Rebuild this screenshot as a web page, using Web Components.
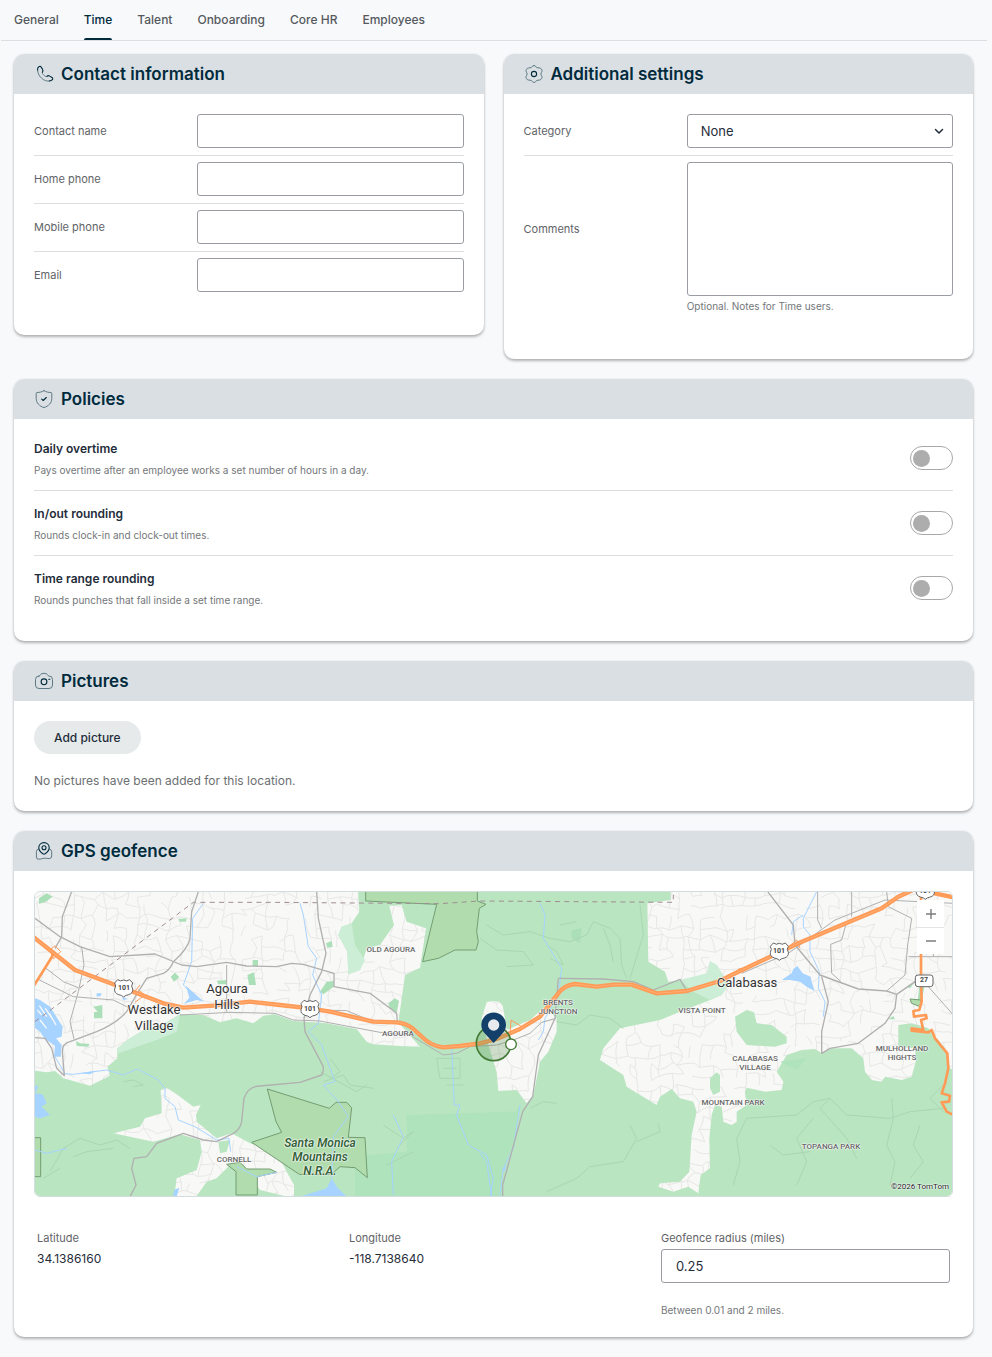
<!DOCTYPE html>
<html lang="en">
<head>
<meta charset="utf-8">
<meta name="viewport" content="width=device-width, initial-scale=1">
<title>Location settings</title>
<style>
  :root {
    --ink: #002b3d;
    --text: #1f2d3a;
    --muted: #5f6367;
    --soft: #74777a;
    --line: #dcdfe2;
    --field: #999da3;
    --head: #dadfe3;
  }
  body { margin: 0; background: #f8f9fb; color: var(--text); font-family: Inter, "Liberation Sans", sans-serif; font-size: 12px; }
</style>
</head>
<body>
<settings-page></settings-page>

<script>
const define = (name, html, setup) => {
  const template = document.createElement('template');
  template.innerHTML = html.trim();
  customElements.define(name, class extends HTMLElement {
    constructor() {
      super();
      this.attachShadow({ mode: 'open' }).append(template.content.cloneNode(true));
    }
    connectedCallback() { if (setup) setup.call(this, this.shadowRoot); }
  });
};

/* ---------- tabs ---------- */
define('tab-bar', `
  <style>
    :host { display: block; margin: 0 5px 0 1px; border-bottom: 1px solid var(--line); }
    nav { display: flex; gap: 25px; padding: 0 13px; }
    a { position: relative; line-height: 40px; font-size: 12px; font-weight: 500; color: #55595e; text-decoration: none; }
    a[aria-current] { color: var(--ink); }
    a[aria-current]::after { content: ""; position: absolute; left: 0; right: 0; bottom: 0; height: 2px; background: var(--ink); border-radius: 2px 2px 0 0; }
  </style>
  <nav aria-label="Location sections">
    <a href="#general">General</a><a href="#time" aria-current="page">Time</a><a href="#talent">Talent</a>
    <a href="#onboarding">Onboarding</a><a href="#core-hr">Core HR</a><a href="#employees">Employees</a>
  </nav>`);

/* ---------- icons ---------- */
const icons = {
  phone: '<path class="l" d="M3.6 6 C3.8 9.5 5.2 12 7.6 14.2 C10 16.4 12.6 17.4 15.4 17"/><path class="l" d="M8.4 8.2 C7.8 9 8.8 10.2 10 11.3 C11.2 12.4 12.2 12.9 13 12.3"/><path d="M3.6 6 C3.4 4.4 4 3.2 5.2 2.6 C6 2.2 6.8 2.4 7.3 3.2 L8.6 5.4 C9.2 6.5 9 7.4 8.4 8.2"/><path d="M13 12.3 C13.8 11.6 14.8 11.5 15.7 12.1 L18 13.5 C18.8 14 19 14.9 18.4 15.6 C17.6 16.5 16.6 16.9 15.4 17"/>',
  gear: '<path class="l" d="M10 1.6 C11.4 1.6 11.9 2.6 12.6 3.5 C13.3 4 14.6 3.6 15.7 4 C17.4 4.6 18.3 5.8 18 7.2 C17.6 8.4 16.9 9 16.9 10 C16.9 11 17.6 11.6 18 12.8 C18.3 14.2 17.4 15.4 15.7 16 C14.6 16.4 13.3 16 12.6 16.5 C11.9 17.4 11.4 18.4 10 18.4 C8.6 18.4 8.1 17.4 7.4 16.5 C6.7 16 5.4 16.4 4.3 16 C2.6 15.4 1.7 14.2 2 12.8 C2.4 11.6 3.1 11 3.1 10 C3.1 9 2.4 8.4 2 7.2 C1.7 5.8 2.6 4.6 4.3 4 C5.4 3.6 6.7 4 7.4 3.5 C8.1 2.6 8.6 1.6 10 1.6Z"/><circle cx="10" cy="10" r="2.6"/>',
  shield: '<path class="l" d="M10 1.7 C12 2.9 14.3 3.5 17 3.5 Q17.8 3.6 17.8 4.5 L17.8 9.5 C17.8 14 14.5 17.2 10 18.6 C5.5 17.2 2.2 14 2.2 9.5 L2.2 4.5 Q2.2 3.6 3 3.5 C5.7 3.5 8 2.9 10 1.7Z"/><path d="M7.7 10.2 L9.2 11.5 L12.3 8.5"/>',
  camera: '<path class="l" d="M5 5 C6.3 5 6.2 3.5 7.3 2.9 Q10 1.6 12.7 2.9 C13.8 3.5 13.7 5 15 5 Q18.5 5 18.5 8.4 V14 Q18.5 17.5 15 17.5 H5 Q1.5 17.5 1.5 14 V8.4 Q1.5 5 5 5Z"/><circle cx="10" cy="10.8" r="2.9"/><path d="M14.8 8.2 H15.9"/>',
  pin: '<path class="l" d="M4.5 8 Q2.4 8.3 2.4 10.6 V16 Q2.4 18.5 5 18.2 C7.5 18 8.3 17.5 10.2 17.2 C12 17 13.6 17.6 15.2 17.6 Q17.7 17.6 17.7 15 V10.6 Q17.7 8.7 15.6 8"/><path d="M10 1.6 C13 1.6 15.2 3.8 15.2 6.7 C15.2 9.5 12.8 11.6 11.1 12.8 Q10 13.5 8.9 12.8 C7.2 11.6 4.8 9.5 4.8 6.7 C4.8 3.8 7 1.6 10 1.6Z"/><circle cx="10" cy="6.8" r="2"/>'
};

/* ---------- card ---------- */
define('settings-card', `
  <style>
    :host { display: block; background: #fff; border-radius: 10px; overflow: hidden; box-shadow: 0 2px 3px rgba(0,0,0,.28), 0 0 2px rgba(0,0,0,.1); }
    header { display: flex; align-items: center; gap: 7px; height: 40px; padding: 0 20px; background: var(--head); color: var(--ink); }
    svg { width: 20px; height: 20px; fill: none; stroke: var(--ink); stroke-width: 1.1; stroke-linecap: round; stroke-linejoin: round; }
    svg .l { stroke: #5f7984; stroke-width: 1; }
    h2 { margin: 0; font-size: 17px; font-weight: 600; line-height: 24px; }
    .body { padding: 0 20px; }
  </style>
  <section>
    <header><svg viewBox="0 0 20 20" aria-hidden="true"></svg><h2></h2></header>
    <div class="body"><slot></slot></div>
  </section>`, function (root) {
  root.querySelector('h2').textContent = this.getAttribute('heading');
  root.querySelector('svg').innerHTML = icons[this.getAttribute('icon')];
});

/* ---------- form rows ---------- */
const rowStyle = `
  <style>
    :host { display: block; border-bottom: 1px solid var(--line); padding: 6px 0 7px; }
    :host([last]) { border-bottom-color: transparent; }
    .row { display: grid; grid-template-columns: 38% 1fr; align-items: center; }
    label { font-size: 11px; line-height: 14px; color: var(--muted); }
    input, select, textarea { box-sizing: border-box; display: block; width: 100%; height: 34px; margin: 0; padding: 0 13px; border: 1px solid var(--field); border-radius: 3px; background: #fff; color: var(--text); font: 13px Inter, "Liberation Sans", sans-serif; outline: 0; }
    textarea { height: 134px; padding: 8px 13px; resize: none; }
    small { grid-column: 2; padding: 3px 0; font-size: 10px; line-height: 14px; color: var(--soft); }
    select { appearance: none; }
    .pick { display: grid; align-items: center; }
    .pick > * { grid-area: 1 / 1; }
    .pick svg { justify-self: end; margin-right: 9px; width: 10px; height: 10px; fill: none; stroke: var(--text); stroke-width: 1.5; stroke-linecap: round; stroke-linejoin: round; pointer-events: none; }
  </style>`;

define('text-row', rowStyle + `<div class="row"><label for="f"></label><input id="f" type="text"></div>`, function (root) {
  root.querySelector('label').textContent = this.getAttribute('label');
});
define('select-row', rowStyle + `<div class="row"><label for="f">Category</label><div class="pick"><select id="f"><option>None</option></select><svg viewBox="0 0 10 10" aria-hidden="true"><path d="M1.5 3.5 L5 7 L8.5 3.5"/></svg></div></div>`);
define('notes-row', rowStyle + `<div class="row"><label for="f">Comments</label><textarea id="f" aria-describedby="h"></textarea><small id="h">Optional. Notes for Time users.</small></div>`);

/* ---------- policy toggles ---------- */
define('policy-row', `
  <style>
    :host { display: flex; align-items: center; justify-content: space-between; border-bottom: 1px solid var(--line); }
    :host([last]) { border-bottom-color: transparent; }
    .copy { padding: 15px 0 13px; }
    label { display: block; font-size: 12px; line-height: 16px; font-weight: 600; color: var(--text); }
    p { margin: 6px 0 0; font-size: 10px; line-height: 14px; color: var(--soft); }
    input { appearance: none; box-sizing: border-box; display: flex; align-items: center; width: 43px; height: 24px; margin: 0; padding: 0 2px; border: 1px solid #a8a8a8; border-radius: 12px; background: #fff; }
    input::before { content: ""; width: 17px; height: 17px; border-radius: 50%; background: #adadad; }
    input:checked { justify-content: flex-end; }
  </style>
  <div class="copy"><label for="t"></label><p id="d"></p></div>
  <input id="t" type="checkbox" role="switch" aria-describedby="d">`, function (root) {
  root.querySelector('label').textContent = this.getAttribute('label');
  root.querySelector('p').textContent = this.getAttribute('note');
});

/* ---------- pictures ---------- */
define('picture-list', `
  <style>
    :host { display: block; padding: 20px 0 22px; }
    button { display: block; height: 33px; padding: 0 20px; border: 0; border-radius: 17px; background: #e6eaeb; color: var(--text); font: 500 12px Inter, "Liberation Sans", sans-serif; }
    p { margin: 19px 0 0; font-size: 12px; line-height: 16px; color: #6c6f72; }
  </style>
  <button type="button">Add picture</button>
  <p>No pictures have been added for this location.</p>`);

/* ---------- map ---------- */
define('map-label', `
  <style>
    :host { position: absolute; left: calc(var(--x) / 917 * 100%); top: calc(var(--y) / 304 * 100%); transform: translate(-50%, -50%); white-space: pre; text-align: center; font: 500 8px/9px Roboto, sans-serif; color: #666; text-shadow: 0 0 2px #fff, 0 0 2px #fff, 0 0 1px #fff; }
    :host([kind="town"]) { font-size: 13px; line-height: 16px; font-weight: 400; color: #333; }
    :host([kind="park"]) { font-size: 12px; line-height: 14px; font-style: italic; color: #35633a; font-weight: 600; }
    :host([kind="road"]) { font-size: 7px; font-weight: 700; color: #444; text-shadow: none; }
    :host([kind="credit"]) { color: #222; font-weight: 400; }
  </style><slot></slot>`);

/* Irregular street lattice: jittered nodes joined with some links left out. */
function streets() {
  let seed = 11;
  const rnd = () => (seed = (seed * 16807) % 2147483647) / 2147483647;
  const step = 32, cols = 90, rows = 31, nodes = [];
  for (let r = 0; r < rows; r++) for (let c = 0; c < cols; c++)
    nodes.push([Math.round(c * step + rnd() * 24 - 12), Math.round(r * step + rnd() * 24 - 12)]);
  let d = '';
  const join = (a, b) => {
    const mx = Math.round((a[0] + b[0]) / 2 + rnd() * 14 - 7), my = Math.round((a[1] + b[1]) / 2 + rnd() * 14 - 7);
    d += `M${a}Q${mx} ${my} ${b}`;
  };
  for (let r = 0; r < rows - 1; r++) for (let c = 0; c < cols - 1; c++) {
    const n = nodes[r * cols + c];
    if (rnd() > .42) join(n, nodes[r * cols + c + 1]);
    if (rnd() > .42) join(n, nodes[(r + 1) * cols + c]);
  }
  return d;
}

define('geo-map', `
  <style>
    :host { display: block; position: relative; overflow: hidden; border: 1px solid #d3dde0; border-radius: 6px; aspect-ratio: 917 / 304; }
    svg.base { display: block; width: 100%; height: 100%; }
    .water { fill: #a6d3ff; }
    .stream { fill: none; stroke: #a6d3ff; stroke-width: 3; stroke-linejoin: round; }
    .park { fill: #b1dcae; stroke: #759d72; stroke-width: 3; }
    .road { fill: none; stroke: #b0b0b0; stroke-width: 4; stroke-linejoin: round; }
    .trail { fill: none; stroke: #aad6b2; stroke-width: 3; stroke-linejoin: round; }
    .minor { fill: none; stroke: #e7e7e6; stroke-width: 3; }
    .way { fill: none; stroke: #ff9b57; stroke-width: 13; stroke-linejoin: round; }
    .way.thin { stroke-width: 8; }
    .core { fill: none; stroke: #ffb680; stroke-width: 2; stroke-linejoin: round; }
    .zoom { position: absolute; top: 8px; right: 8px; display: grid; grid-auto-rows: 27px; grid-template-columns: 27px; background: #fff; }
    button { display: grid; place-items: center; margin: 0; padding: 0; border: 0; background: #fff; }
    button + button { border-top: 1px solid #e4e4e4; }
    button svg { width: 12px; height: 12px; stroke: #7c7c7c; stroke-width: 1.4; }
  </style>
  <svg class="base" viewBox="15 21 2751 912" preserveAspectRatio="xMidYMid slice" role="img" aria-label="Map of the geofence around Agoura and Calabasas">
    <rect x="0" y="0" width="2800" height="960" fill="#f8f8f7"/>
    <path class="minor" id="streets"/>
    <path fill="#b9e5c1" fill-rule="evenodd" d="M0,555 50,562 75,558 100,580 180,602 240,572 232,545 262,520 262,490 300,460 350,430 380,430 420,405 450,388 520,390 570,412 620,400 670,415 700,392 735,388 790,408 890,415 980,432 1010,470 1030,478 1110,483 1170,485 1130,440 1105,412 1108,390 1125,270 1170,248 1188,130 1130,110 1115,60 1078,62 1092,120 1050,180 1010,190 990,255 955,268 952,200 925,150 935,125 965,115 988,80 983,0 1922,0 1922,45 1852,55 1855,230 1905,260 1915,290 1950,285 2030,270 2040,230 2060,240 2085,280 2095,300 2075,330 2040,345 1950,380 1890,405 1770,430 1720,490 1710,525 1780,570 1790,605 1880,660 1890,635 1925,612 1950,640 1990,650 2000,680 1985,750 1978,860 1950,890 1890,895 1885,905 1930,920 1975,905 2005,925 2012,870 2040,850 2038,760 2045,690 2055,660 2075,665 2080,710 2105,720 2120,710 2120,680 2150,660 2145,620 2150,608 2205,620 2255,615 2260,590 2240,560 2270,510 2315,495 2355,492 2375,505 2405,490 2465,490 2500,520 2505,560 2525,585 2555,590 2565,575 2615,585 2645,575 2657,530 2655,490 2605,485 2605,420 2645,415 2695,430 2745,490 2760,550 2770,555 2770,940 0,940Z
      M1370,352 1385,348 1408,350 1418,362 1425,400 1430,435 1500,405 1545,365 1580,400 1580,440 1555,500 1530,530 1510,630 1490,655 1460,615 1405,618 1400,560 1375,480 1355,400Z
      M392,615 410,608 440,628 490,665 512,660 498,690 500,710 560,760 605,745 660,775 740,800 770,860 792,900 792,940 690,915 640,840 600,840 560,880 530,890 495,940 432,940 440,880 500,855 515,800 510,765 450,748 370,770 300,755 250,745 330,725 345,700 395,685Z"/>
    <path fill="#b9e5c1" d="M2115,395 2150,375 2172,382 2180,415 2225,420 2270,455 2270,475 2235,485 2150,480 2120,440ZM2040,580 2060,562 2070,570 2070,620 2050,630 2040,610ZM565,770 600,765 590,800 570,805Z"/>
    <path fill="#cdeed6" d="M925,150 935,125 965,115 975,180 1005,225 990,255 955,268 952,200ZM1950,285 2030,265 2040,228 2060,240 2095,300 2075,330 2040,345 1990,320ZM262,490 300,460 350,430 380,430 450,388 440,440 380,465 265,505Z"/>
    <path fill="#aee3bb" d="M1130,690 1455,680 1470,660 1455,760 1420,860 1415,940 975,940 975,850 1010,810 1130,800ZM2250,530 2330,520 2300,555Z"/>
    <path fill="#abdfb8" d="M27,40 50,25 68,35 45,52 27,56ZM190,365 217,360 217,400 192,400 192,382 203,380ZM445,102 470,100 468,110 448,110ZM422,275 435,263 448,277 432,290ZM560,287 590,285 588,298 565,298ZM668,225 684,225 684,245 668,243ZM652,270 672,262 678,300 657,300ZM138,468 150,475 178,477 175,485 140,483ZM888,175 905,168 908,185 892,188ZM870,320 890,290 911,288 911,305 880,328ZM1075,355 1095,340 1107,348 1100,385 1078,368ZM1625,135 1655,130 1650,175 1625,160ZM2630,305 2655,290 2640,310ZM2668,305 2683,305 2675,350 2663,345ZM2575,403 2590,393 2595,403Z"/>
    <g class="park">
      <path d="M1007,0V48L1220,58 1178,230 1225,220 1275,195H1338L1345,170 1340,140 1348,70 1368,58 1342,48V0Z"/>
      <path d="M712,612 898,670 918,652H950L965,668 955,757 1005,758 1012,878 975,848 930,845 905,868H808L665,772 755,742 738,710Z"/>
      <path d="M590,838 618,860V930H682V875L740,862 720,852H650L630,832Z"/>
      <path d="M0,758H32V875H0ZM2640,342 2673,345 2670,365 2645,355Z"/>
    </g>
    <path class="trail" d="M60,860 100,790 150,760 210,780 260,765 300,790M40,880 90,850M130,815 170,800 250,790M280,590 310,585 340,600 310,605M880,590 940,570 960,600 1030,610M900,520 930,560 900,580M870,560 980,620 1010,600M1220,520H1290V580H1230ZM1240,550H1280M1250,600H1300M1060,720 1120,760 1150,740 1100,790M1070,840 1110,820 1150,800M1370,120 1420,150 1500,140 1560,160 1620,170 1670,150 1690,110 1740,130 1770,160 1775,240 1790,280M1720,130 1740,180 1750,230M1550,180 1580,200 1600,240 1560,220M1350,160 1400,195 1480,200 1510,240 1430,245M1830,60 1840,150 1800,280M1590,120 1640,110M1580,410 1640,420 1680,390 1740,400 1780,430M1500,670 1540,650 1580,655M1800,720 1820,760 1780,830 1680,845 1640,880 1550,920M1820,770 1890,740 1885,715M2150,700 2300,690 2350,650 2400,640 2450,690 2580,700 2640,680 2740,670M2585,640 2590,700 2570,780 2595,830 2580,900M2150,700 2120,760 2130,830 2110,900M2400,640 2370,670 2450,760 2480,820M2670,720 2650,780 2680,830 2640,880M2350,700 2300,760 2330,830 2300,900M2220,780 2260,810 2340,800M2740,600 2700,640 2740,680"/>
    <path class="water" d="M0,335 30,345 60,365 98,425 95,455 78,460 95,480 92,515 72,515 75,482 45,462 30,440 0,418ZM0,595 25,605 15,625 38,628 50,655 35,665 60,690 30,700 0,690ZM468,302 485,318 522,350 500,345 462,356 478,338ZM200,325 215,325 212,333 200,335ZM275,336 295,342 280,345ZM150,565 200,557 180,568ZM432,915 448,908 440,935 430,935ZM810,935 890,910 905,880 920,905 950,935ZM2255,285 2285,265 2290,252 2302,243 2318,265 2342,275 2345,290 2354,318 2330,305 2310,290 2280,285ZM1415,855 1428,840 1425,858Z"/>
    <path fill="none" stroke="#f8f8f7" stroke-width="4" d="M22,375 35,390M28,362 50,395M46,370 66,400M30,405 50,430M58,385 78,420"/>
    <path class="stream" d="M75,515 105,566 130,568 230,555 280,570 322,552 385,585 405,610V640L435,665 445,705 495,725 560,765 597,760 602,800M520,55 488,100 485,230 460,300 480,320M810,55 820,90 835,185 860,220 848,270 875,330 865,415 835,440 875,480 915,590 880,600 925,650 955,695 910,755 905,880M1265,490 1273,660 1290,660 1280,690 1315,780 1370,810 1390,880 1380,935M1090,690 1120,755 1085,830 1090,930M1530,55 1545,90 1540,160 1595,250 1585,330 1545,400 1540,440 1525,465M1470,660 1450,790 1420,850 1410,930M1350,805 1370,830 1385,935M2360,20 2335,70 2320,100V125L2340,150V200L2368,260 2365,310 2385,350 2380,395M2285,150 2290,110 2320,90M15,795 50,805 110,790M620,845 680,875 740,862"/>
    <path fill="none" stroke="#a08d92" stroke-width="3" stroke-dasharray="15 13" d="M15,410 490,52H720L1230,56 1350,48 1930,52V30"/>
    <g class="road">
      <path d="M15,100 90,155 150,185 240,215 375,207 455,240 500,245 590,232 650,243 740,245 785,235 820,238 912,265V305L1020,325 1100,385 1102,410"/>
      <path d="M125,20 97,95 95,155 75,190M505,20 485,80 480,160 Q475,190 430,230 Q420,255 400,265 L350,280 325,320 290,380 Q260,415 200,440 L120,470 Q97,475 97,500 L103,572 80,550 65,490 45,460 15,458"/>
      <path d="M28,285 130,335 250,345 300,370M155,185 162,240 145,320 120,410 132,462M48,250 100,290 145,308" stroke-width="3"/>
      <path d="M860,20 865,100 888,205 875,260 840,330 822,400 825,440 880,545 Q880,565 875,570 L810,592 690,603 Q655,603 642,640 L635,710 Q630,735 610,745 L560,770 520,765 460,745 380,775 350,815 312,820 305,850 318,900 300,935"/>
      <path d="M450,390 600,382 735,385 790,405 870,408 1050,442 1140,450 1240,510 1280,505 1320,485 1400,480 1450,465 1500,445 1535,412 1578,400M590,240V380M870,375 950,377 1030,410" stroke-width="3"/>
      <path d="M1585,280 1720,282 1810,290 1870,315M1870,315 1950,283 1975,325"/>
      <path d="M1585,280 1575,400 1525,510 1508,635 1478,680 1418,900V935"/>
      <path d="M2213,20 2290,120 2295,180 2370,270 2485,312 2570,318 2600,328 2595,370 2565,415 2485,475 2400,490 2375,505V440L2395,350 2375,275M2600,328 2655,290"/>
      <path d="M2570,318 2625,270 2633,180 2645,100 2575,65 2570,20M2363,20V105L2375,130M2450,110 2435,165 2402,178 2405,265 2433,290M2465,20V95M2135,265 2275,205 2415,105 2565,45 2770,55M2695,305 2770,390M2635,215H2770M2710,60V215" stroke-width="3"/>
    </g>
    <path class="way thin" d="M75,200 60,225 10,305M2673,20V290L2675,350 2668,375 2650,378 2652,395 2688,390 2690,400 2673,405 2680,435 2645,430 2645,437 2695,442 2705,435 2715,460 2752,505 2755,550 2745,595 2735,625 2760,632 2757,650 2735,652 2750,680 2775,692"/>
    <path fill="none" stroke="#ff9b57" stroke-width="3" d="M60,195 75,182 92,200 70,222ZM310,325 330,300M325,315 345,330 315,352M1443,405 1475,425M1443,405 1440,450M2270,190 2300,165 2310,190M2110,265 2130,250 2140,262"/>
    <path class="way" d="M0,148 135,255 250,298 400,355 460,368 550,362 660,350 750,360 840,370 900,380 1030,410 1100,412 Q1130,415 1150,432 L1190,468 Q1215,485 1240,487 L1290,483 1350,475 1400,462 1470,432 1530,395 1585,325 Q1600,302 1635,297 L1700,305 1750,299H1805L1880,325 1970,318 2070,288 2105,270 2305,175 2555,70 2605,35 2660,10M2690,20 2775,38"/>
    <path class="core" d="M0,148 135,255 250,298 400,355 460,368 550,362 660,350 750,360 840,370 900,380 1030,410 1100,412 Q1130,415 1150,432 L1190,468 Q1215,485 1240,487 L1290,483 1350,475 1400,462 1470,432 1530,395 1585,325 Q1600,302 1635,297 L1700,305 1750,299H1805L1880,325 1970,318 2070,288 2105,270 2305,175 2555,70 2605,35 2660,10"/>
    <circle cx="1391" cy="475" r="52" fill="#4f8a45" fill-opacity=".25" stroke="#437a36" stroke-width="5"/>
    <path d="M1391 474 L1366 447 A37 37 0 1 1 1416 447Z" fill="#12406a"/>
    <circle cx="1391" cy="420" r="17" fill="#e8eaee"/>
    <circle cx="1443" cy="478" r="16" fill="#fff" stroke="#437a36" stroke-width="4"/>
    <defs><path id="us" d="M-18,-25 Q-9,-18 0,-24 Q9,-18 18,-25 L27,-15 Q21,-6 27,3 Q29,15 15,20 Q6,21 0,27 Q-6,21 -15,20 Q-29,15 -27,3 Q-21,-6 -27,-15Z" fill="#fff" stroke="#666" stroke-width="3"/></defs>
    <use href="#us" x="281" y="309"/><use href="#us" x="840" y="371"/><use href="#us" x="2248" y="199"/><use href="#us" x="2686" y="16"/>
    <rect x="2656" y="270" width="53" height="35" rx="8" fill="#fff" stroke="#666" stroke-width="3"/>
  </svg>
  <map-label kind="town" style="--x:192;--y:105">Agoura
Hills</map-label>
  <map-label kind="town" style="--x:119;--y:126">Westlake
Village</map-label>
  <map-label kind="town" style="--x:712;--y:91">Calabasas</map-label>
  <map-label style="--x:356;--y:57">OLD AGOURA</map-label>
  <map-label style="--x:363;--y:141">AGOURA</map-label>
  <map-label style="--x:523;--y:115">BRENTS
JUNCTION</map-label>
  <map-label style="--x:667;--y:118">VISTA POINT</map-label>
  <map-label style="--x:720;--y:171">CALABASAS
VILLAGE</map-label>
  <map-label style="--x:867;--y:161">MULHOLLAND
HIGHTS</map-label>
  <map-label style="--x:698;--y:210">MOUNTAIN PARK</map-label>
  <map-label style="--x:796;--y:254">TOPANGA PARK</map-label>
  <map-label style="--x:199;--y:267">CORNELL</map-label>
  <map-label kind="park" style="--x:285;--y:265">Santa Monica
Mountains
N.R.A.</map-label>
  <map-label kind="road" style="--x:89;--y:96">101</map-label>
  <map-label kind="road" style="--x:275;--y:117">101</map-label>
  <map-label kind="road" style="--x:744;--y:59">101</map-label>
  <map-label kind="road" style="--x:890;--y:-1">101</map-label>
  <map-label kind="road" style="--x:889;--y:88">27</map-label>
  <map-label kind="credit" style="--x:885;--y:294">©2026 TomTom</map-label>
  <div class="zoom">
    <button type="button" aria-label="Zoom in"><svg viewBox="0 0 12 12"><path d="M1 6H11M6 1V11"/></svg></button>
    <button type="button" aria-label="Zoom out"><svg viewBox="0 0 12 12"><path d="M1 6H11"/></svg></button>
  </div>`, function (root) {
  root.getElementById('streets').setAttribute('d', streets());
});

define('geofence-panel', `
  <style>
    :host { display: block; padding: 20px 0; }
    .facts { display: grid; grid-template-columns: repeat(3, 1fr); gap: 23px; margin: 34px 0 0; padding: 0 3px; }
    dl { margin: 0; }
    dt, label { display: block; font-size: 11px; line-height: 14px; color: var(--muted); }
    dd { margin: 6px 0 0; font-size: 12px; line-height: 16px; color: var(--text); }
    input { box-sizing: border-box; display: block; width: 100%; height: 34px; margin: 4px 0 0; padding: 0 14px; border: 1px solid var(--field); border-radius: 3px; background: #fff; color: var(--text); font: 13px Inter, "Liberation Sans", sans-serif; }
    small { display: block; margin-top: 20px; font-size: 10px; line-height: 14px; color: var(--soft); }
  </style>
  <geo-map></geo-map>
  <div class="facts">
    <dl><dt>Latitude</dt><dd>34.1386160</dd></dl>
    <dl><dt>Longitude</dt><dd>-118.7138640</dd></dl>
    <div><label for="r">Geofence radius (miles)</label><input id="r" type="text" inputmode="decimal" value="0.25" aria-describedby="h"><small id="h">Between 0.01 and 2 miles.</small></div>
  </div>`);

/* ---------- page ---------- */
define('settings-page', `
  <style>
    :host { display: block; }
    main { display: grid; gap: 20px; padding: 13px 19px 20px 14px; }
    .pair { display: grid; grid-template-columns: 1fr 1fr; gap: 20px; align-items: start; }
    .form { padding: 14px 0 35px; }
    .policies { padding: 7px 0 20px; }
  </style>
  <tab-bar></tab-bar>
  <main>
    <div class="pair">
      <settings-card heading="Contact information" icon="phone"><div class="form">
        <text-row label="Contact name"></text-row>
        <text-row label="Home phone"></text-row>
        <text-row label="Mobile phone"></text-row>
        <text-row label="Email" last></text-row>
      </div></settings-card>
      <settings-card heading="Additional settings" icon="gear"><div class="form">
        <select-row></select-row>
        <notes-row last></notes-row>
      </div></settings-card>
    </div>
    <settings-card heading="Policies" icon="shield"><div class="policies">
      <policy-row label="Daily overtime" note="Pays overtime after an employee works a set number of hours in a day."></policy-row>
      <policy-row label="In/out rounding" note="Rounds clock-in and clock-out times."></policy-row>
      <policy-row label="Time range rounding" note="Rounds punches that fall inside a set time range." last></policy-row>
    </div></settings-card>
    <settings-card heading="Pictures" icon="camera"><picture-list></picture-list></settings-card>
    <settings-card heading="GPS geofence" icon="pin"><geofence-panel></geofence-panel></settings-card>
  </main>`);
</script>
</body>
</html>
